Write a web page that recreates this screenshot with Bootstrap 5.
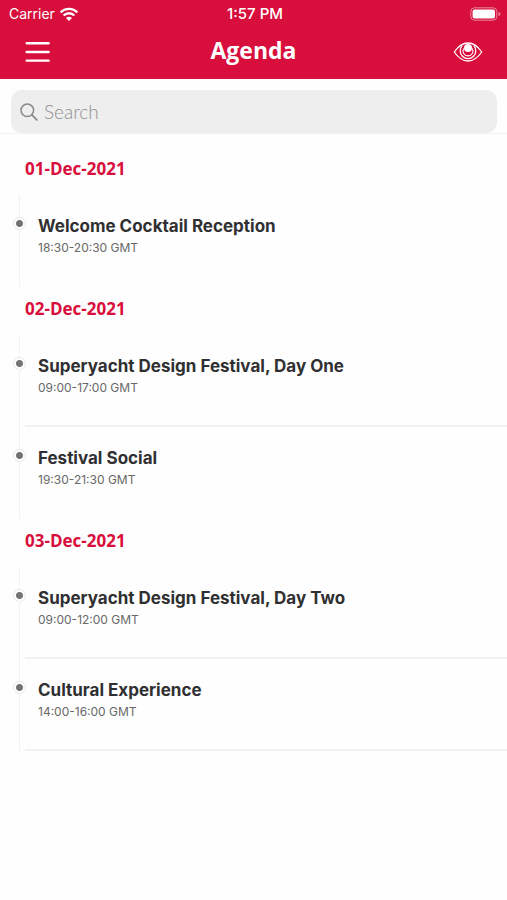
<!DOCTYPE html>
<html lang="en">
<head>
<meta charset="utf-8">
<meta name="viewport" content="width=device-width, initial-scale=1">
<title>Agenda</title>
<link href="https://cdn.jsdelivr.net/npm/bootstrap@5.3.0/dist/css/bootstrap.min.css" rel="stylesheet">
<style>
  :root { --brand: #d80e3c; }
  body { font-family: Inter, "Liberation Sans", sans-serif; color: #303032; background: #fefefe; }
  .app-header { background: var(--brand); color: #fff; padding-bottom: 7px; }
  .status-bar { height: 28px; padding: 0 6px 0 9px; font-size: 14px; line-height: 20px; }
  .status-bar .clock { font-size: 15px; font-weight: 500; }
  .title-bar { height: 44px; padding: 0 24px; }
  .title-bar h1 { font: 700 23px/32px "Open Sans", "Noto Sans", sans-serif; }
  .icon-btn { color: #fff; line-height: 0; }
  .search-wrap { padding: 11px 10px 0 11px; border-bottom: 1px solid #f3f3f3; }
  .search-box { background: #eee; border-radius: 11px; height: 43px; padding: 0 9px; color: #8a8a8a; gap: 6px; }
  .search-box input { font: 300 19px/28px Lato, sans-serif; color: #555; box-shadow: none; }
  .search-box input::placeholder { color: #8f8f8f; opacity: 1; }
  .agenda { padding-top: 13px; }
  .day-title { font: 700 17px/24px "Open Sans", "Noto Sans", sans-serif; color: var(--brand); height: 48px; padding: 10px 0 0 25px; }
  .event { display: grid; grid-template-columns: 25px 1fr; height: 92px; }
  .rail { display: grid; justify-items: center; grid-template-rows: 22px 13px 1fr; padding-left: 13px; }
  .rail::before, .rail::after { content: ""; width: 1px; background: #f1f1f1; }
  .dot { width: 13px; height: 13px; border: 1px solid #e8e8e8; border-radius: 50%; background: radial-gradient(circle, #737373 3px, #fff 4px); }
  .event-body { padding: 19px 0 0 13px; border-bottom: 2px solid #f2f2f2; }
  .event-open .event-body { border-color: transparent; }
  .event-name { font-size: 17px; line-height: 24px; font-weight: 700; }
  .event-time { font-size: 12px; line-height: 20px; color: #686868; }
</style>
<script src="https://cdn.jsdelivr.net/npm/bootstrap@5.3.0/dist/js/bootstrap.bundle.min.js" defer></script>
</head>
<body>
<header class="app-header">
  <div class="status-bar row g-0 align-items-center">
    <div class="col d-flex align-items-center gap-1">
      <span>Carrier</span>
      <svg width="20" height="15" viewBox="0 0 20 15" fill="none" stroke="#fff" stroke-width="2.4" aria-hidden="true"><path d="M1.6 5.3C6.3.7 13.700.7 18.400 5.300M4.600 8.500C7.700 5.500 12.300 5.500 15.400 8.500"/><path d="M7 10.900C8.700 9.200 11.300 9.200 13 10.900L10 14Z" fill="#fff" stroke="none"/></svg>
    </div>
    <div class="col-auto clock">1:57 PM</div>
    <div class="col d-flex justify-content-end">
      <svg width="31" height="14" viewBox="0 0 31 14" aria-hidden="true"><rect x=".8" y=".8" width="26" height="12.400" rx="3.800" fill="none" stroke="#fff" stroke-opacity=".5"/><rect x="2.600" y="2.600" width="22.400" height="8.800" rx="2" fill="#fff"/><path d="M28.500 4.800Q30.500 5.500 30.500 7T28.500 9.200Z" fill="#fff" fill-opacity=".5"/></svg>
    </div>
  </div>
  <nav class="title-bar row g-0 align-items-center" aria-label="Main">
    <div class="col">
      <button type="button" class="btn p-0 border-0 icon-btn" aria-label="Menu">
        <svg width="27" height="22" viewBox="0 0 27 22" stroke="#fff" stroke-width="2.400" stroke-linecap="round"><path d="M2.700 3.200H24.700M2.700 12H24.700M2.700 20.600H24.700"/></svg>
      </button>
    </div>
    <h1 class="col-auto m-0">Agenda</h1>
    <div class="col text-end">
      <button type="button" class="btn p-0 border-0 icon-btn" aria-label="Show or hide">
        <svg width="30" height="22" viewBox="0 0 30 22" fill="none" stroke="#fff" stroke-width="1.300" stroke-linejoin="round"><path d="M1.300 12Q7.500 3 15 3T28.700 12Q22.500 21 15 21T1.300 12Z"/><path d="M9 5.800A7.800 7.800 0 1 0 21 5.800"/><path d="M10.600 8.500A5 5 0 1 0 19.400 8.500" stroke-width="1.100"/><circle cx="15" cy="8" r="4" fill="#fff" stroke="none"/></svg>
      </button>
    </div>
  </nav>
</header>

<main>
  <form class="search-wrap" role="search">
    <div class="search-box d-flex align-items-center">
      <svg class="flex-shrink-0" width="18" height="18" viewBox="0 0 18 18" fill="none" stroke="currentColor" stroke-width="1.500" stroke-linecap="round" aria-hidden="true"><circle cx="7.300" cy="7.300" r="6.300"/><path d="M11.900 11.900L16.800 16.800" stroke-width="1.800"/></svg>
      <input type="text" class="form-control border-0 bg-transparent p-0" placeholder="Search" aria-label="Search">
    </div>
  </form>

  <div class="agenda">
    <section>
      <h2 class="day-title m-0">01-Dec-2021</h2>
      <ul class="list-unstyled m-0">
        <li class="event event-open"><div class="rail"><span class="dot"></span></div><div class="event-body"><h3 class="event-name m-0">Welcome Cocktail Reception</h3><p class="event-time m-0">18:30-20:30 GMT</p></div></li>
      </ul>
    </section>
    <section>
      <h2 class="day-title m-0">02-Dec-2021</h2>
      <ul class="list-unstyled m-0">
        <li class="event"><div class="rail"><span class="dot"></span></div><div class="event-body"><h3 class="event-name m-0">Superyacht Design Festival, Day One</h3><p class="event-time m-0">09:00-17:00 GMT</p></div></li>
        <li class="event event-open"><div class="rail"><span class="dot"></span></div><div class="event-body"><h3 class="event-name m-0">Festival Social</h3><p class="event-time m-0">19:30-21:30 GMT</p></div></li>
      </ul>
    </section>
    <section>
      <h2 class="day-title m-0">03-Dec-2021</h2>
      <ul class="list-unstyled m-0">
        <li class="event"><div class="rail"><span class="dot"></span></div><div class="event-body"><h3 class="event-name m-0">Superyacht Design Festival, Day Two</h3><p class="event-time m-0">09:00-12:00 GMT</p></div></li>
        <li class="event"><div class="rail"><span class="dot"></span></div><div class="event-body"><h3 class="event-name m-0">Cultural Experience</h3><p class="event-time m-0">14:00-16:00 GMT</p></div></li>
      </ul>
    </section>
  </div>
</main>
</body>
</html>
